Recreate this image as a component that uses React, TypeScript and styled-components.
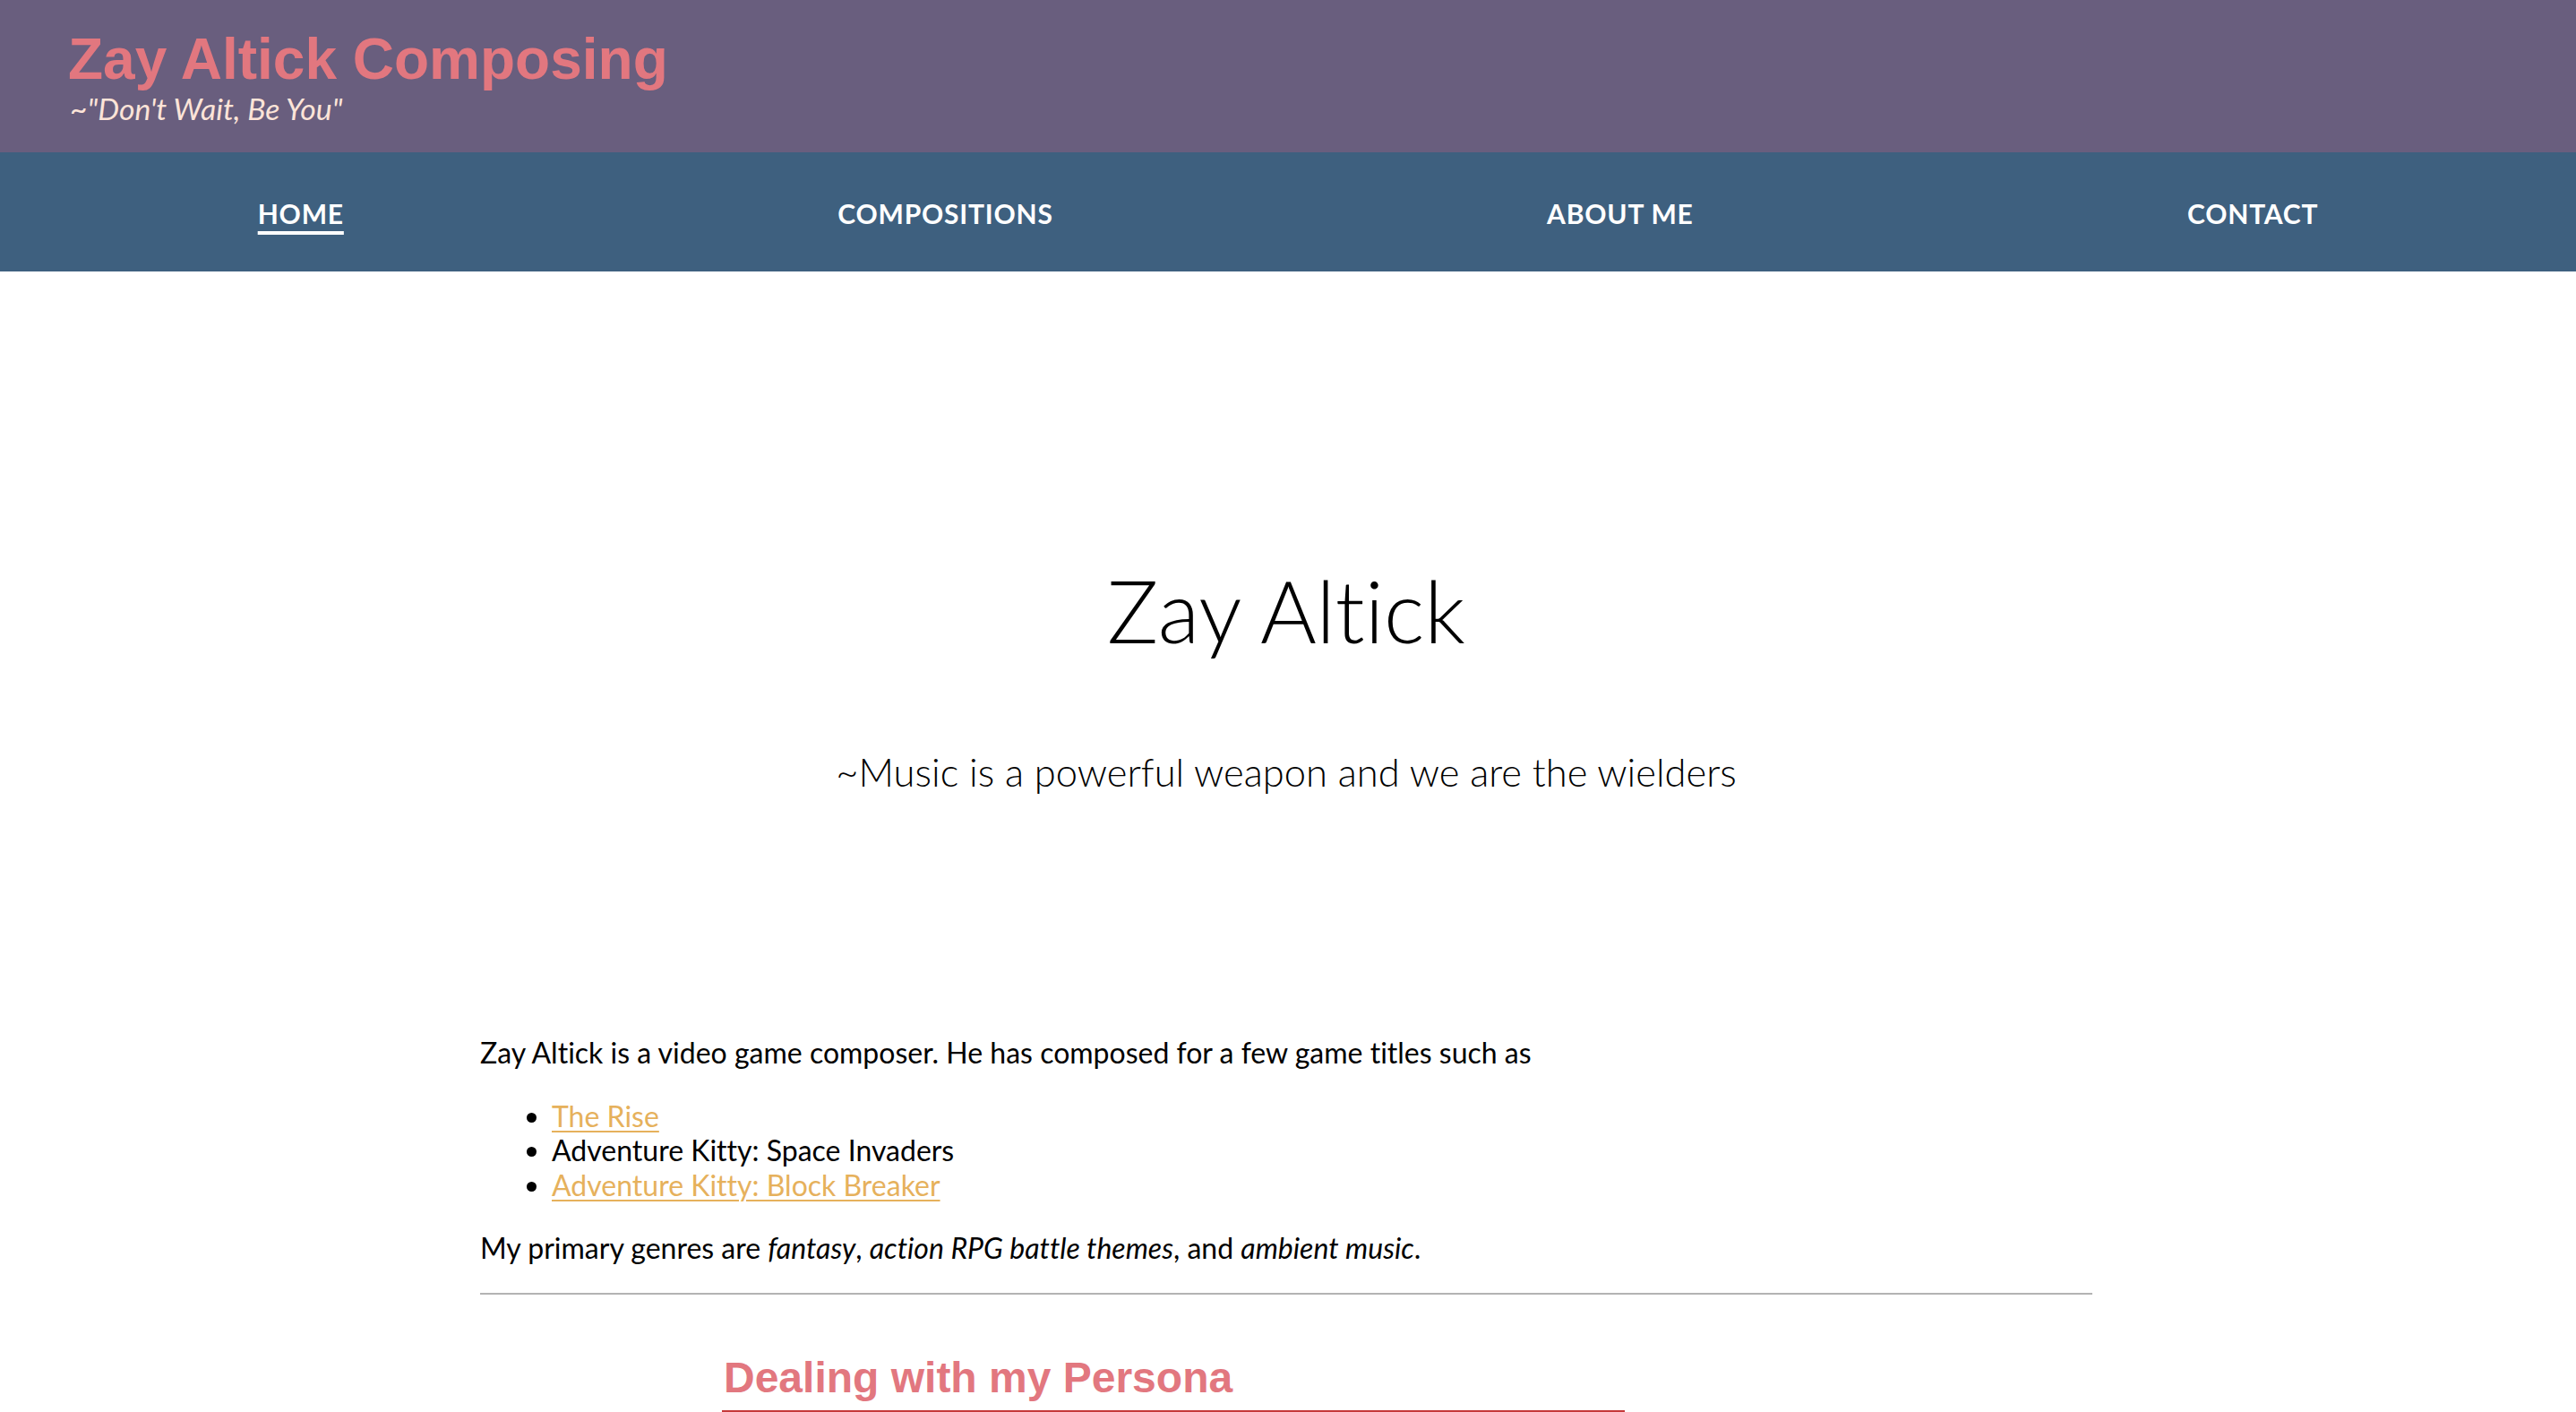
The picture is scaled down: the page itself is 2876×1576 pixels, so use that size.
import React from "react";
import styled, { createGlobalStyle } from "styled-components";

const GlobalStyle = createGlobalStyle`
  html, body {
    margin: 0;
    padding: 0;
    background: #ffffff;
  }
  body {
    font-family: Lato, "Open Sans", sans-serif;
    font-variant-ligatures: none;
    color: #000000;
  }
  * { box-sizing: border-box; }
`;

const Header = styled.header`
  height: 170px;
  background: #695e7e;
  padding: 34px 0 0 76px;
`;

const SiteTitle = styled.h1`
  margin: 0;
  font-family: "Liberation Sans", Arial, sans-serif;
  font-weight: 700;
  font-size: 64px;
  line-height: 64px;
  color: #e2777f;
`;

const Motto = styled.p`
  margin: 3px 0 0 2px;
  font-family: Lato, sans-serif;
  font-style: italic;
  font-size: 33.7px;
  line-height: 1.2;
  color: #fde4d8;
`;

const NavBar = styled.nav`
  height: 133px;
  background: #3e607f;
  display: flex;
  align-items: center;
  justify-content: space-around;
  padding: 3px 12px 0;
`;

const NavLink = styled.a<{ $active?: boolean }>`
  font-family: Lato, sans-serif;
  font-weight: 700;
  font-size: 30px;
  line-height: 1.2;
  letter-spacing: 0.8px;
  color: #ffffff;
  text-decoration: ${(p) => (p.$active ? "underline" : "none")};
  text-decoration-thickness: 4px;
  text-underline-offset: 8px;
  cursor: pointer;
`;

const Page = styled.div`
  padding-right: 4px;
`;

const Main = styled.main`
  width: 1800px;
  margin: 0 auto;
`;

const Hero = styled.section`
  display: flex;
  flex-direction: column;
  align-items: center;
  padding-top: 320px;
`;

const HeroName = styled.h2`
  margin: 0;
  font-family: Lato, sans-serif;
  font-weight: 300;
  font-size: 96px;
  line-height: 1.2;
`;

const Tagline = styled.p`
  margin: 97px 0 0;
  font-family: Lato, sans-serif;
  font-weight: 300;
  font-size: 43.5px;
  line-height: 1.2;
`;

const Intro = styled.div`
  padding-top: 269px;
`;

const Paragraph = styled.p`
  margin: 0;
  font-size: 32px;
  line-height: 1.2;
`;

const List = styled.ul`
  margin: 32px 0;
  padding-left: 80px;
  font-size: 32px;
  line-height: 1.2;
`;

const Item = styled.li``;

const GameLink = styled.a`
  color: #e6b15c;
  text-decoration: underline;
  text-decoration-thickness: 2px;
  text-underline-offset: 4px;
`;

const Rule = styled.hr`
  margin: 31px 0 0;
  border: none;
  height: 2px;
  background: #b3b3b3;
`;

const Article = styled.article`
  margin: 65px 0 0 270px;
  width: 1008px;
`;

const ArticleTitle = styled.h3`
  margin: 0;
  padding: 0 0 8px 2px;
  font-family: "Liberation Sans", Arial, sans-serif;
  font-weight: 700;
  font-size: 48px;
  line-height: 1.15;
  color: #e2777f;
  border-bottom: 4px solid #c5393a;
`;

export default function App() {
  return (
    <>
      <GlobalStyle />
      <Header>
        <SiteTitle>Zay Altick Composing</SiteTitle>
        <Motto>~"Don't Wait, Be You"</Motto>
      </Header>
      <NavBar>
        <NavLink $active>HOME</NavLink>
        <NavLink>COMPOSITIONS</NavLink>
        <NavLink>ABOUT ME</NavLink>
        <NavLink>CONTACT</NavLink>
      </NavBar>
      <Page>
        <Main>
          <Hero>
            <HeroName>Zay Altick</HeroName>
            <Tagline>~Music is a powerful weapon and we are the wielders</Tagline>
          </Hero>
          <Intro>
            <Paragraph>
              Zay Altick is a video game composer. He has composed for a few game titles such as
            </Paragraph>
            <List>
              <Item>
                <GameLink>The Rise</GameLink>
              </Item>
              <Item>Adventure Kitty: Space Invaders</Item>
              <Item>
                <GameLink>Adventure Kitty: Block Breaker</GameLink>
              </Item>
            </List>
            <Paragraph>
              My primary genres are <em>fantasy</em>, <em>action RPG battle themes</em>, and{" "}
              <em>ambient music</em>.
            </Paragraph>
            <Rule />
          </Intro>
          <Article>
            <ArticleTitle>Dealing with my Persona</ArticleTitle>
          </Article>
        </Main>
      </Page>
    </>
  );
}
